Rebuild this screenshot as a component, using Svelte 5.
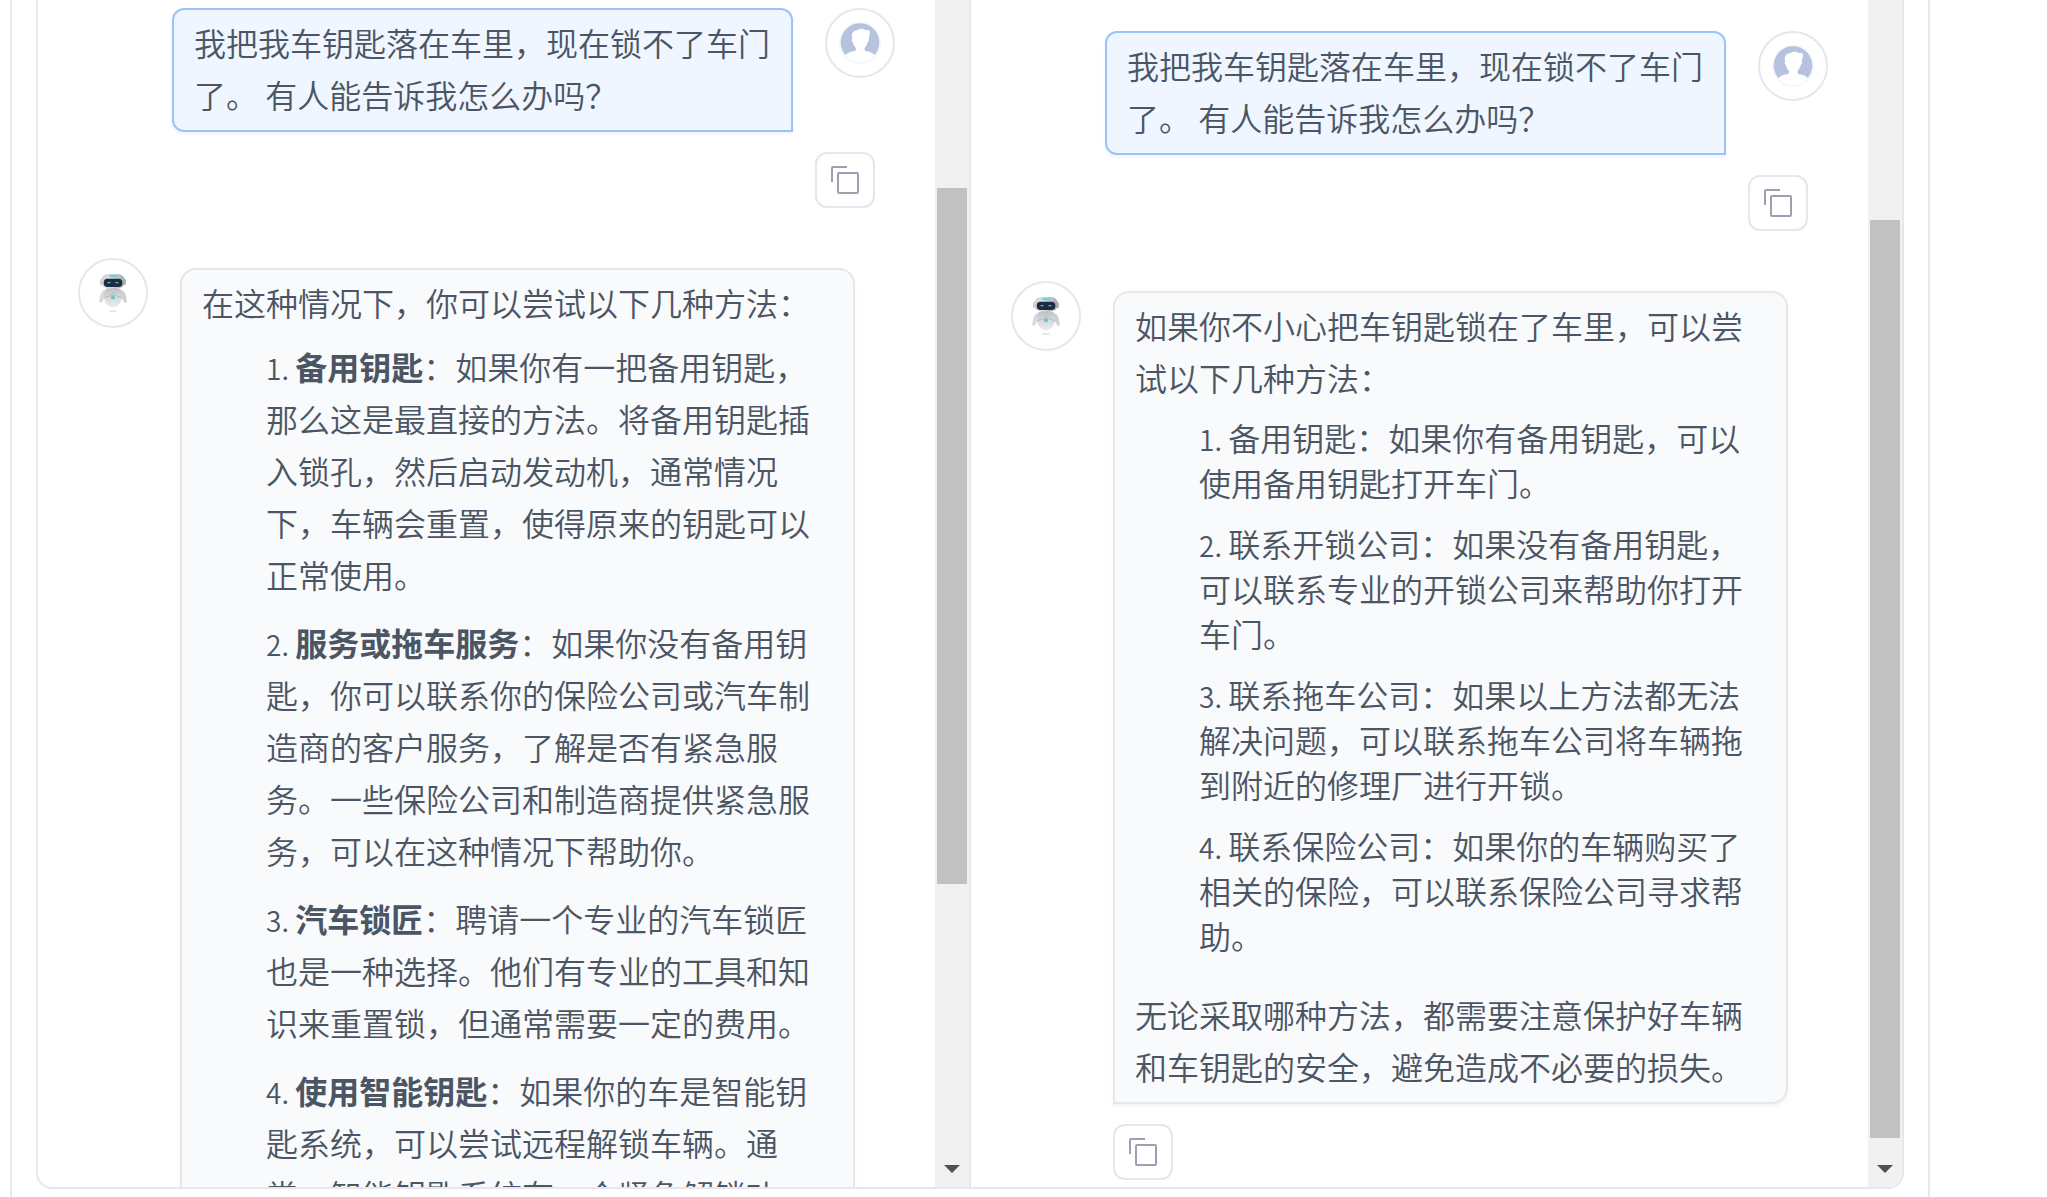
<script>
  const question = '我把我车钥匙落在车里，现在锁不了车门了。 有人能告诉我怎么办吗？'

  const panes = [
    {
      id: 'left',
      top: 8,
      thumb: { top: 188, size: 696 },
      intro: '在这种情况下，你可以尝试以下几种方法：',
      loose: true,
      items: [
        { title: '备用钥匙', text: '：如果你有一把备用钥匙，那么这是最直接的方法。将备用钥匙插入锁孔，然后启动发动机，通常情况下，车辆会重置，使得原来的钥匙可以正常使用。' },
        { title: '服务或拖车服务', text: '：如果你没有备用钥匙，你可以联系你的保险公司或汽车制造商的客户服务，了解是否有紧急服务。一些保险公司和制造商提供紧急服务，可以在这种情况下帮助你。' },
        { title: '汽车锁匠', text: '：聘请一个专业的汽车锁匠也是一种选择。他们有专业的工具和知识来重置锁，但通常需要一定的费用。' },
        { title: '使用智能钥匙', text: '：如果你的车是智能钥匙系统，可以尝试远程解锁车辆。通常，智能钥匙系统有一个紧急解锁功能。' }
      ],
      outro: ''
    },
    {
      id: 'right',
      top: 31,
      thumb: { top: 220, size: 918 },
      intro: '如果你不小心把车钥匙锁在了车里，可以尝试以下几种方法：',
      loose: false,
      items: [
        { title: '', text: '备用钥匙：如果你有备用钥匙，可以使用备用钥匙打开车门。' },
        { title: '', text: '联系开锁公司：如果没有备用钥匙，可以联系专业的开锁公司来帮助你打开车门。' },
        { title: '', text: '联系拖车公司：如果以上方法都无法解决问题，可以联系拖车公司将车辆拖到附近的修理厂进行开锁。' },
        { title: '', text: '联系保险公司：如果你的车辆购买了相关的保险，可以联系保险公司寻求帮助。' }
      ],
      outro: '无论采取哪种方法，都需要注意保护好车辆和车钥匙的安全，避免造成不必要的损失。'
    }
  ]

  const trackHeight = 1187
  const pct = (n) => `${(n / trackHeight) * 100}%`

  function copy(text) {
    navigator.clipboard?.writeText(text)
  }

  function answerText(pane) {
    return [pane.intro, ...pane.items.map((it, i) => `${i + 1}. ${it.title}${it.text}`), pane.outro].join('\n')
  }
</script>

{#snippet copyButton(text)}
  <button class="copy" type="button" aria-label="复制" onclick={() => copy(text)}>
    <svg width="28" height="28" viewBox="0 0 28 28" fill="none" stroke="#9ca0b0" stroke-width="2">
      <path d="M1 16V2Q1 1 2 1H16" />
      <rect x="7" y="7" width="20" height="20" rx="1" />
    </svg>
  </button>
{/snippet}

{#snippet userIcon()}
  <svg width="42" height="42" viewBox="0 0 42 42">
    <circle cx="21" cy="21" r="21" fill="#f1f9fe" />
    <circle cx="21" cy="21" r="19" fill="#fff" />
    <path
      fill="#b7c3de"
      d="M6.300 33A19.300 19.300 0 1 1 35.700 33C33.500 30.800 30 29.500 26.500 29C25.500 28.400 25.300 27 25.800 25.500C27.500 23.800 28.300 22 28.700 20C30.500 18.500 30.300 17 29.600 16.300C30.300 13.500 31.500 11 30.600 8.800C29.500 7.800 27.800 8.300 26.500 8C25 6.700 22.500 6.500 20.500 7C19 8.300 16.500 8 14.800 9.200C12.600 11 12.600 13.800 13.300 16.500C12 17.500 12.800 19.300 14 20.200C14.300 22.300 15.300 24.200 16.700 25.600C17.200 27 17 28.400 16 29C12 29.500 8.800 30.600 6.300 33Z"
    />
  </svg>
{/snippet}

{#snippet botIcon(id)}
  <svg width="28" height="38" viewBox="0 0 84 114">
    <defs>
      <linearGradient id="head-{id}" x1="0" x2="1" y1="0" y2="0">
        <stop offset="0" stop-color="#d0d3d4" />
        <stop offset="0.4" stop-color="#dcdfe0" />
        <stop offset="1" stop-color="#a0a7aa" />
      </linearGradient>
      <linearGradient id="body-{id}" x1="0" x2="0" y1="0" y2="1">
        <stop offset="0" stop-color="#b9bec0" />
        <stop offset="0.4" stop-color="#d3d6d8" />
        <stop offset="1" stop-color="#ececed" />
      </linearGradient>
    </defs>
    <ellipse cx="42" cy="111" rx="12" ry="3" fill="#e6e6e6" />
    <path d="M17 47Q4 52 1 78Q0 88 5 87Q12 84 15 72Z" fill="#d8dadb" />
    <path d="M67 47Q80 52 83 78Q84 88 79 87Q72 84 69 72Z" fill="#cdd0d2" />
    <path d="M22 44Q42 38 62 44Q72 52 69 72Q64 94 50 98Q42 101 34 98Q20 94 15 72Q12 52 22 44Z" fill="url(#body-{id})" />
    <path d="M16 71Q30 70 42 57Q54 70 68 71" fill="none" stroke="#b4babd" stroke-width="3" />
    <rect x="36" y="64" width="12" height="12" rx="4" fill="#6fc3d2" />
    <rect x="3" y="14" width="10" height="20" rx="5" fill="#c9cccd" />
    <rect x="71" y="14" width="10" height="20" rx="5" fill="#b6bbbe" />
    <rect x="6" y="0" width="72" height="43" rx="21" fill="url(#head-{id})" />
    <path d="M29 2H55L51 10H33Z" fill="#72d0d8" />
    <rect x="14" y="14" width="56" height="25" rx="12" fill="#1d2b43" />
    <rect x="25" y="24" width="10" height="4" rx="2" fill="#57b6c9" />
    <rect x="49" y="24" width="10" height="4" rx="2" fill="#57b6c9" />
  </svg>
{/snippet}

<main class="frame" lang="zh-CN">
  <div class="panes">
    {#each panes as pane (pane.id)}
      <section class="pane">
        <div class="chat" style="padding-top: {pane.top}px">
          <article class="message user">
            <div class="bubble">
              <p>{question}</p>
            </div>
            <div class="avatar">{@render userIcon()}</div>
          </article>
          <div class="actions user-actions">
            {@render copyButton(question)}
          </div>

          <article class="message bot">
            <div class="avatar">{@render botIcon(pane.id)}</div>
            <div class="answer">
              <div class="bubble">
                <p>{pane.intro}</p>
                <ol class:loose={pane.loose}>
                  {#each pane.items as item}
                    <li>{#if item.title}<strong>{item.title}</strong>{/if}{item.text}</li>
                  {/each}
                </ol>
                {#if pane.outro}
                  <p>{pane.outro}</p>
                {/if}
              </div>
              <div class="actions">
                {@render copyButton(answerText(pane))}
              </div>
            </div>
          </article>
        </div>

        <div class="scrollbar" aria-hidden="true">
          <div class="thumb" style="top: {pct(pane.thumb.top)}; height: {pct(pane.thumb.size)}"></div>
          <span class="arrow"></span>
        </div>
      </section>
    {/each}
  </div>
</main>

<style>
  :global(body) {
    margin: 0;
    background: #fff;
  }

  .frame {
    box-sizing: border-box;
    height: 100vh;
    margin: 0 117px 0 10px;
    padding: 0 24px 8px;
    border: solid #e5e7eb;
    border-width: 0 2px;
    overflow: hidden;
    font-family: "Noto Sans CJK SC", sans-serif;
    font-size: 32px;
    font-weight: 350;
    line-height: 52px;
    color: #4b5563;
  }

  .panes {
    box-sizing: border-box;
    display: flex;
    height: 100%;
    border: 2px solid #e5e7eb;
    border-top: 0;
    border-radius: 0 0 16px 16px;
    overflow: hidden;
  }

  .pane {
    flex: 1 1 0;
    display: flex;
    min-width: 0;
  }
  .pane:first-child { border-right: 2px solid #e5e7eb; }

  .chat {
    flex: 1;
    min-width: 0;
    padding: 0 40px;
    overflow: hidden;
  }

  .message {
    display: flex;
    align-items: flex-start;
    gap: 32px;
  }
  .user { padding-left: 94px; }
  .user .bubble {
    flex: 1;
    background: #eff6ff;
    border-color: #9ac3fb;
    border-radius: 12px 12px 0 12px;
  }
  .bot { padding-top: 50px; }

  .answer {
    flex: 1;
    min-width: 0;
    padding: 10px 40px 0 0;
  }

  .bubble {
    padding: 6px 20px 10px;
    background: #f9fafc;
    border: 2px solid #e5e7eb;
    border-radius: 16px 16px 16px 0;
    box-shadow: 0 2px 4px rgba(0, 0, 0, 0.05);
  }

  .avatar {
    box-sizing: border-box;
    flex: none;
    display: flex;
    align-items: center;
    justify-content: center;
    width: 70px;
    height: 70px;
    border: 2px solid #e5e7eb;
    border-radius: 50%;
  }

  p { margin: 0; }

  ol {
    margin: 12px 0 30px;
    padding: 0 0 0 64px;
    list-style: none;
    line-height: 45px;
  }
  ol.loose { line-height: 52px; }

  li + li { margin-top: 16px; }
  li::before {
    content: counter(list-item) ". ";
    font-size: 28px;
    line-height: 28px;
  }

  strong { font-weight: 700; }

  .actions {
    display: flex;
    padding-top: 20px;
  }
  .user-actions {
    justify-content: flex-end;
    padding-right: 20px;
  }

  .copy {
    box-sizing: border-box;
    display: flex;
    align-items: center;
    justify-content: center;
    width: 60px;
    height: 56px;
    padding: 0;
    background: #fff;
    border: 2px solid #e5e7eb;
    border-radius: 12px;
    cursor: pointer;
  }

  .scrollbar {
    position: relative;
    flex: none;
    display: flex;
    align-items: flex-end;
    justify-content: center;
    width: 34px;
    background: #f1f1f1;
  }
  .thumb {
    position: absolute;
    left: 2px;
    right: 2px;
    background: #c1c1c1;
  }
  .arrow {
    margin-bottom: 14px;
    border: solid transparent;
    border-width: 8px 8px 0;
    border-top-color: #505050;
  }
</style>
